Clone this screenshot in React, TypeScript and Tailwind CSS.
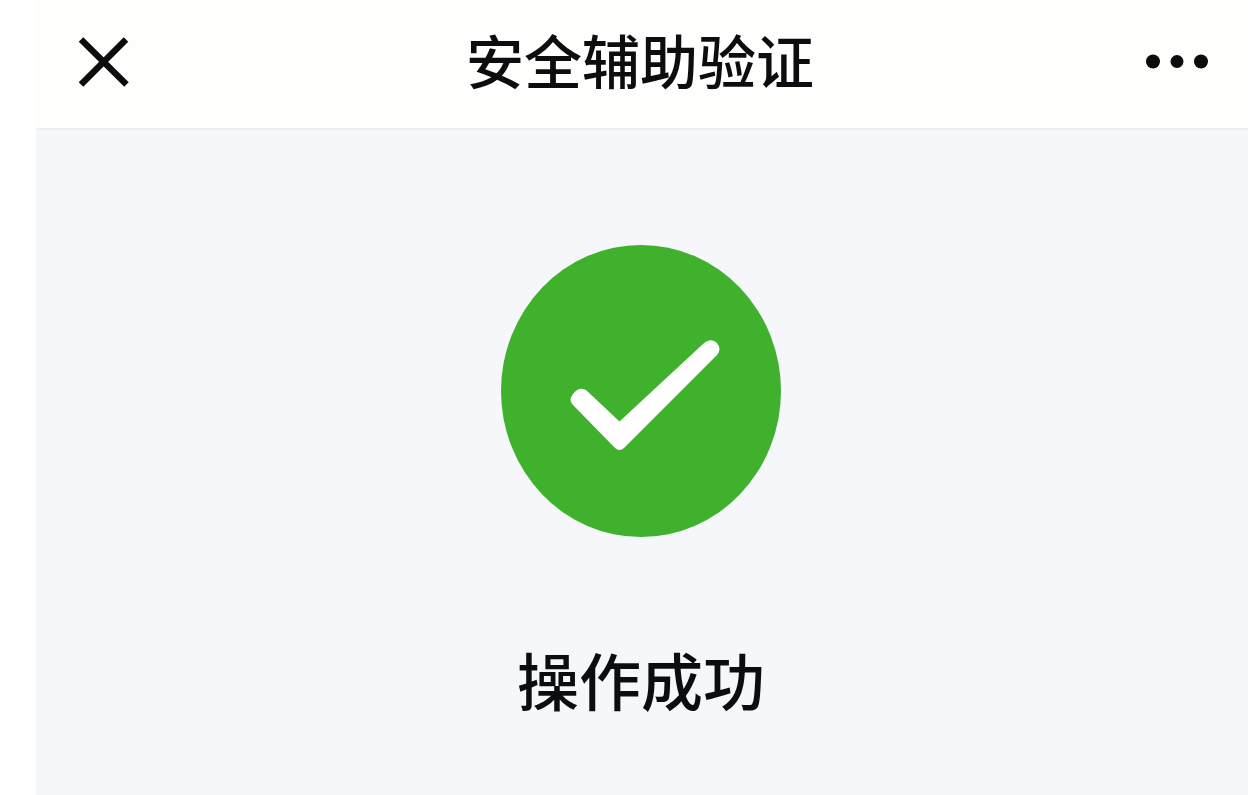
interface HeaderProps {
  title: string
}

function CloseIcon() {
  return (
    <svg viewBox="0 0 64 64" className="w-16 h-16" fill="none" stroke="#0c0c0c" strokeWidth="6.4" aria-hidden="true">
      <path d="M9 9.5 L54.5 54.5 M54 9.5 L9 54.5" />
    </svg>
  )
}

function MoreIcon() {
  return (
    <svg viewBox="0 0 64 64" className="w-16 h-16" fill="#0c0c0c" aria-hidden="true">
      <circle cx="9" cy="31.5" r="7" />
      <circle cx="33" cy="31.5" r="6.5" />
      <circle cx="57" cy="31.5" r="7" />
    </svg>
  )
}

function SuccessIcon() {
  return (
    <svg viewBox="0 0 280 292" className="w-[280px] h-[292px]" role="img" aria-label="成功">
      <ellipse cx="140" cy="146" rx="140" ry="146" fill="#3fb12d" />
      <path
        fill="#ffffff"
        d="M72 149 Q78 141 85 145 L118.500 176.500 L202 99 Q210 92 216 98 Q221 104 216 110 L123 203 Q118.500 207 114 203 L72 160 Q67 155 72 149 Z"
      />
    </svg>
  )
}

function Header({ title }: HeaderProps) {
  return (
    <header className="grid grid-cols-[1fr_auto_1fr] items-center bg-[#fefefd] border-b-2 border-[#eceeef] pl-9 pr-10 pt-5 pb-6">
      <button type="button" aria-label="关闭" className="justify-self-start">
        <CloseIcon />
      </button>
      <h1 className="text-[58px] leading-[78px] pb-1.5 font-medium">{title}</h1>
      <button type="button" aria-label="更多" className="justify-self-end">
        <MoreIcon />
      </button>
    </header>
  )
}

export default function App() {
  return (
    <div className="min-h-screen bg-white pl-9 pr-[11px]">
      <div className="min-h-screen flex flex-col text-[#0c0d0f] font-['Noto_Sans_CJK_SC',sans-serif]">
        <Header title="安全辅助验证" />
        <main className="flex-1 flex flex-col items-center gap-24 bg-[#f5f7fa] pt-[115px] pr-0.5">
          <SuccessIcon />
          <p className="text-[62px] leading-[92px] font-medium">操作成功</p>
        </main>
      </div>
    </div>
  )
}
